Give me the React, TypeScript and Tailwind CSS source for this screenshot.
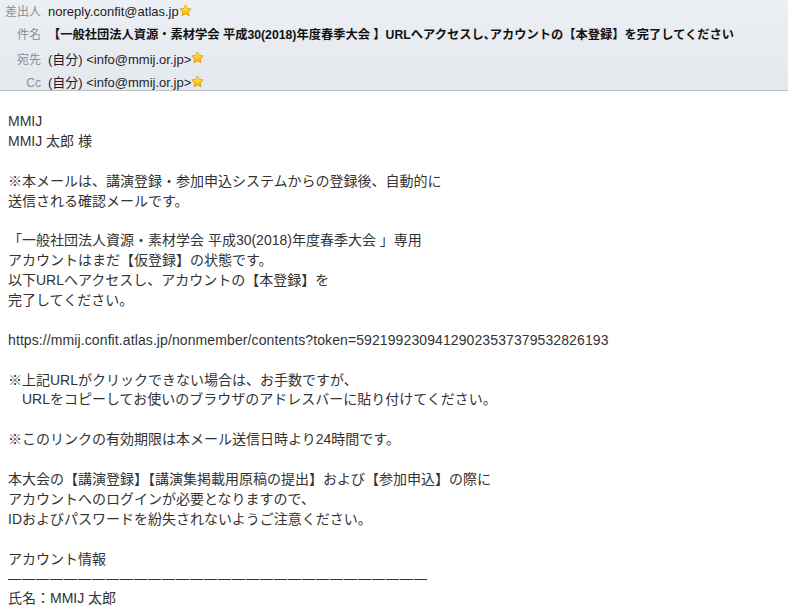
import React from "react";

function Star() {
  return (
    <svg width="13" height="13" viewBox="0 0 24 24" className="inline-block align-middle -mt-[5px]">
      <defs>
        <linearGradient id="sg" x1="0" y1="0" x2="0" y2="1">
          <stop offset="0" stopColor="#fff3a0" />
          <stop offset="0.5" stopColor="#ffd21f" />
          <stop offset="1" stopColor="#f0a800" />
        </linearGradient>
      </defs>
      <path
        d="M12 1.5l3.2 6.7 7.3 1-5.3 5.1 1.3 7.3L12 18.1l-6.5 3.5 1.3-7.3L1.5 9.2l7.3-1z"
        fill="url(#sg)"
        stroke="#d89400"
        strokeWidth="1.4"
        strokeLinejoin="round"
      />
    </svg>
  );
}

const font = "font-['Liberation_Sans','Noto_Sans_CJK_JP',sans-serif]";

function Row({ label, children, h }: { label: string; children: React.ReactNode; h: string }) {
  return (
    <div className={`flex items-center ${h}`}>
      <div className="w-[41px] shrink-0 text-right text-[12px] text-[#8a8f96]">{label}</div>
      <div className="pl-[7px] text-[13px] text-[#1e1e1e] whitespace-nowrap">{children}</div>
    </div>
  );
}

export default function App() {
  const lines: string[] = [
    "MMIJ",
    "MMIJ 太郎 様",
    "",
    "※本メールは、講演登録・参加申込システムからの登録後、自動的に",
    "送信される確認メールです。",
    "",
    "「一般社団法人資源・素材学会 平成30(2018)年度春季大会 」専用",
    "アカウントはまだ【仮登録】の状態です。",
    "以下URLへアクセスし、アカウントの【本登録】を",
    "完了してください。",
    "",
    "URL",
    "",
    "※上記URLがクリックできない場合は、お手数ですが、",
    "　URLをコピーしてお使いのブラウザのアドレスバーに貼り付けてください。",
    "",
    "※このリンクの有効期限は本メール送信日時より24時間です。",
    "",
    "本大会の【講演登録】【講演集掲載用原稿の提出】および【参加申込】の際に",
    "アカウントへのログインが必要となりますので、",
    "IDおよびパスワードを紛失されないようご注意ください。",
    "",
    "アカウント情報",
    "DASH",
    "氏名：MMIJ 太郎",
  ];
  return (
    <div className={`w-[788px] h-[609px] overflow-hidden bg-white ${font}`}>
      <div className="h-[91px] bg-gradient-to-b from-[#eceff3] to-[#e4e9ef] border-b border-[#b9c0c8] pt-[1px]">
        <Row label="差出人" h="h-[22px]">
          noreply.confit@atlas.jp
          <Star />
        </Row>
        <Row label="件名" h="h-[24px]">
          <span className="font-bold text-[12.25px] text-[#111]">
            【一般社団法人資源・素材学会 平成30(2018)年度春季大会 】URLへアクセスし､アカウントの【本登録】を完了してください
          </span>
        </Row>
        <Row label="宛先" h="h-[25px]">
          (自分) &lt;info@mmij.or.jp&gt;
          <Star />
        </Row>
        <Row label="Cc" h="h-[22px]">
          (自分) &lt;info@mmij.or.jp&gt;
          <Star />
        </Row>
      </div>
      <div className="pt-[21px] px-[8px] text-[14px] leading-[19.9px] text-[#333]">
        {lines.map((l, i) => {
          if (l === "URL") {
            return (
              <div key={i} className="whitespace-pre h-[19.9px] tracking-[0.1px]">
                https://mmij.confit.atlas.jp/nonmember/contents?token=59219923094129023537379532826193
              </div>
            );
          }
          if (l === "DASH") {
            return (
              <div key={i} className="whitespace-pre h-[19.9px] text-[13px] tracking-[1px]">
                ――――――――――――――――――――――――――――――
              </div>
            );
          }
          return (
            <div key={i} className="whitespace-pre h-[19.9px]">
              {l === "" ? "\u00a0" : l}
            </div>
          );
        })}
      </div>
    </div>
  );
}
